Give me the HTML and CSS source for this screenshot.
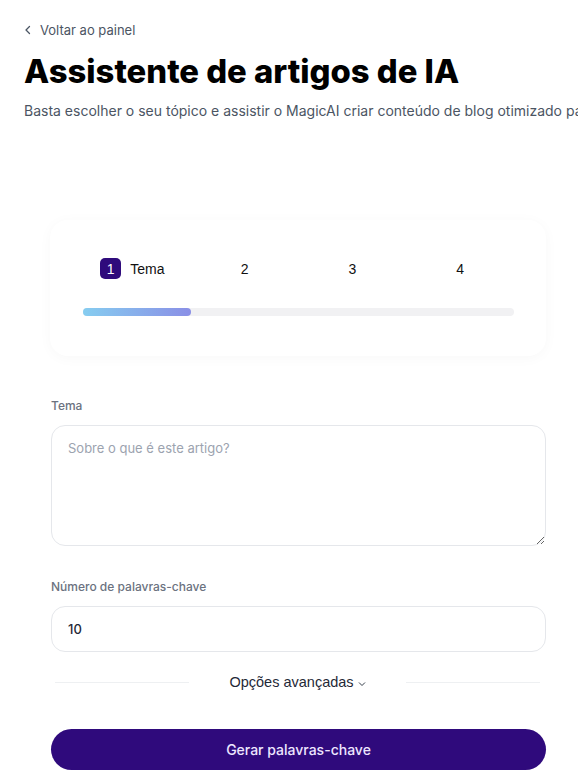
FILE: index.html
```html
<!DOCTYPE html>
<html lang="pt">
<head>
<meta charset="utf-8">
<link rel="stylesheet" href="styles.css">
</head>
<body>
<div class="page">
  <a class="back" href="#"><svg width="10" height="10" viewBox="0 0 10 10"><path d="M6.5 1.5 3 5l3.5 3.5" fill="none" stroke="#4b5563" stroke-width="1.3" stroke-linecap="round" stroke-linejoin="round"/></svg><span>Voltar ao painel</span></a>
  <h1 class="title">Assistente de artigos de IA</h1>
  <p class="subtitle">Basta escolher o seu tópico e assistir o MagicAI criar conteúdo de blog otimizado para SEO em minutos.</p>

  <div class="wizard">
    <div class="steps-card">
      <div class="steps">
        <div class="step active"><span class="badge">1</span><span class="step-label">Tema</span></div>
        <div class="step">2</div>
        <div class="step">3</div>
        <div class="step">4</div>
      </div>
      <div class="progress"><div class="progress-fill"></div></div>
    </div>

    <form class="form">
      <label class="label">Tema</label>
      <textarea class="field textarea" placeholder="Sobre o que é este artigo?"></textarea>
      <label class="label label-2">Número de palavras-chave</label>
      <input class="field input" type="text" value="10">
      <div class="advanced">
        <span class="line"></span>
        <span class="adv-text">Opções avançadas <svg width="8" height="6" viewBox="0 0 8 6"><path d="M1 1.5 4 4.5 7 1.5" fill="none" stroke="#1f2937" stroke-width="0.9"/></svg></span>
        <span class="line"></span>
      </div>
      <button class="submit" type="button">Gerar palavras-chave</button>
    </form>
  </div>
</div>
</body>
</html>
```

FILE: styles.css
```css
* { box-sizing: border-box; }
html, body { margin: 0; padding: 0; background: #fff; overflow: hidden; }
body { font-family: Inter, "Noto Sans", sans-serif; color: #111827; }
.page { padding: 22px 0 0 24px; width: 578px; }
.back { display: flex; align-items: center; gap: 7px; font-size: 13px; color: #4b5563; text-decoration: none; height: 16px; }
.back svg { margin-left: -1px; }
.title { margin: 12px 0 0; font-size: 32.8px; font-weight: 800; letter-spacing: 0; line-height: 42px; color: #000; }
.subtitle { margin: 9px 0 0; font-size: 14px; color: #4b5563; white-space: nowrap; line-height: 20px; }

.wizard { margin: 99px 0 0 26px; width: 496px; }
.steps-card { background: #fff; border-radius: 18px; box-shadow: 0 2px 14px rgba(0,0,0,0.03); padding: 38px 32px 40px 33px; }
.steps { display: grid; grid-template-columns: repeat(4, 1fr); font-family: "Liberation Sans", Arial, sans-serif; font-size: 14px; color: #111; height: 21px; align-items: center; }
.step { display: flex; justify-content: center; align-items: center; }
.step.active { gap: 9px; margin-left: -9px; }
.badge { width: 21px; height: 21px; border-radius: 5px; background: #2f0b7c; color: #fff; display: flex; align-items: center; justify-content: center; font-size: 14px; }
.progress { margin-top: 29px; height: 8px; border-radius: 4px; background: #f1f1f3; }
.progress-fill { width: 25%; height: 100%; border-radius: 4px; background: linear-gradient(90deg, #86cdf0, #8a8fe6); }

.form { display: flex; flex-direction: column; padding-top: 42px; }
.label { font-size: 12px; font-weight: 500; color: #6b7280; margin-left: 1px; line-height: 16px; }
.label-2 { margin-top: 33px; }
.field { margin: 11px 0 0 1px; width: 495px; border: 1px solid #e5e7eb; border-radius: 14px; font-family: Inter, sans-serif; font-size: 13px; color: #1f2937; background: #fff; outline: none; }
.textarea { height: 121px; padding: 14px 16px; resize: vertical; }
.textarea::placeholder { color: #9ca3af; }
.input { height: 46px; padding: 0 16px; font-weight: 500; }
.advanced { display: flex; align-items: center; margin-top: 20px; height: 20px; padding: 0 6px 0 5px; }
.line { flex: 1; height: 1px; background: #eef0f2; }
.adv-text { font-family: "Liberation Sans", Arial, sans-serif; font-size: 14.5px; color: #1f2937; padding: 0 40px; display: flex; align-items: center; gap: 4px; }
.adv-text svg { margin-top: 4px; }
.submit { margin: 37px 0 0 1px; width: 495px; height: 41px; border: none; border-radius: 21px; background: #2f0a7c; color: #ede6ff; font-family: Inter, sans-serif; font-size: 14px; font-weight: 500; }
```
